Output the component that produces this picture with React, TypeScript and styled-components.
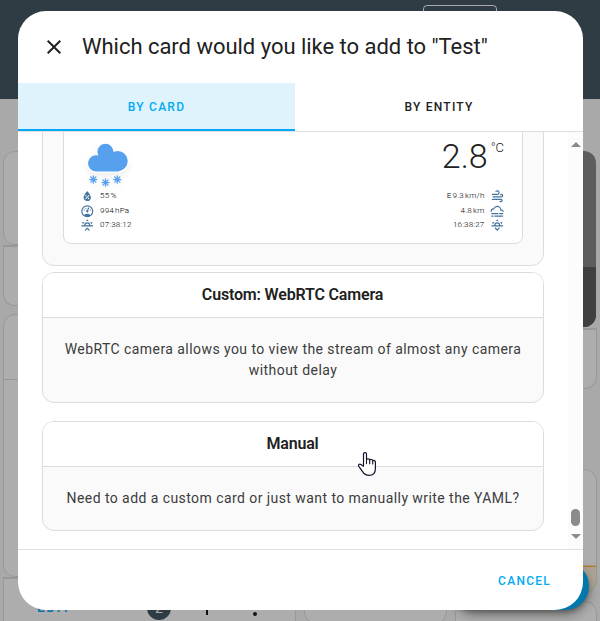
import React from "react";
import styled, { createGlobalStyle } from "styled-components";

const GlobalStyle = createGlobalStyle`
  *, *::before, *::after { box-sizing: border-box; }
  html, body { margin: 0; padding: 0; overflow: hidden; }
  body { font-family: Roboto, "Noto Sans", sans-serif; color: #212121; }
  button { font-family: inherit; border: 0; background: none; padding: 0; margin: 0; }
  svg { display: block; flex: none; }
`;

const Screen = styled.div`
  position: relative;
  width: 600px;
  height: 621px;
  overflow: hidden;
  background: #a9a9a9;
`;

/* ---------- dashboard behind the dialog ---------- */

const AppHeader = styled.header`
  display: flex;
  height: 99px;
  padding: 5px 0 0 423px;
  background: #2f3c44;
`;

const HeaderBox = styled.div`
  width: 74px;
  height: 40px;
  border: 1px solid #a9a9a9;
  border-radius: 4px;
`;

const Columns = styled.main`
  display: grid;
  grid-template-columns: 293px 293px;
  column-gap: 8px;
  padding: 52px 4px 0 3px;
`;

const Column = styled.div`
  display: flex;
  flex-direction: column;
`;

const Tile = styled.div<{ $h: number; $gap?: number; $joined?: boolean }>`
  height: ${(p) => p.$h}px;
  margin-top: ${(p) => p.$gap ?? 0}px;
  flex: none;
  overflow: hidden;
  background: #adadad;
  border: 1px solid #989898;
  border-top-width: ${(p) => (p.$joined ? 2 : 1)}px;
  border-radius: ${(p) => (p.$joined ? "0 0 12px 12px" : "12px")};
`;

const TileHeading = styled.div`
  height: 65px;
  border-bottom: 1px solid #989898;
`;

const EditBar = styled.div`
  display: flex;
  align-items: center;
  height: 58px;
  padding-left: 33px;
  color: #111;
`;

const EditLabel = styled.span`
  width: 110px;
  font-size: 14px;
  line-height: 16px;
  padding-bottom: 2px;
  font-weight: 500;
  letter-spacing: 1.25px;
  color: #0b74a8;
`;

const CountBadge = styled.span`
  display: flex;
  align-items: center;
  justify-content: center;
  width: 24px;
  height: 24px;
  margin-right: 24px;
  border-radius: 50%;
  background: #2f3c44;
  color: #a9a9a9;
  font-size: 14px;
`;

const BarIcon = styled.span`
  width: 24px;
  margin-right: 24px;
`;

const Camera = styled.div`
  height: 176px;
  width: 292px;
  border-radius: 12px;
  overflow: hidden;
  background: #5d5d5d;
  display: flex;
  align-items: flex-end;
`;

const CameraFooter = styled.div`
  width: 100%;
  height: 60px;
  background: #404040;
`;

const Pair = styled.div`
  display: grid;
  grid-template-columns: 143px 142px;
  gap: 8px;
`;

const GraphFill = styled.div`
  height: 30px;
  margin-top: 96px;
  border-top: 1px solid #b27b24;
  box-shadow: 0 -1px 0 rgba(178, 123, 36, 0.4);
  background: #ada495;
`;

const Fab = styled.div`
  position: absolute;
  right: 11px;
  bottom: 11px;
  width: 138px;
  height: 48px;
  border-radius: 24px;
  background: #0277ac;
  box-shadow: 0 3px 5px -1px rgba(0, 0, 0, 0.3), 0 6px 10px rgba(0, 0, 0, 0.22), 0 1px 14px rgba(0, 0, 0, 0.14);
`;

/* ---------- dialog ---------- */

const Dialog = styled.section`
  position: absolute;
  left: 18px;
  top: 11px;
  width: 565px;
  height: 599px;
  display: flex;
  flex-direction: column;
  overflow: hidden;
  border-radius: 28px;
  background: #fff;
`;

const DialogHeader = styled.div`
  display: flex;
  align-items: center;
  height: 72px;
  padding-left: 24px;
  gap: 16px;
`;

const CloseButton = styled.button`
  width: 24px;
  height: 24px;
  color: #212121;
`;

const Title = styled.h1`
  margin: 0;
  font-size: 22px;
  line-height: 28px;
  font-weight: 400;
  letter-spacing: -0.025px;
  white-space: nowrap;
`;

const Tabs = styled.div`
  display: grid;
  grid-template-columns: 277px 288px;
  height: 48px;
  flex: none;
`;

const Tab = styled.button<{ $active?: boolean }>`
  padding-top: 2px;
  font-size: 12px;
  font-weight: 500;
  letter-spacing: 1.25px;
  color: ${(p) => (p.$active ? "#03a9f4" : "#212121")};
  background: ${(p) => (p.$active ? "#dff3fd" : "#fff")};
  border-bottom: 2px solid ${(p) => (p.$active ? "#03a9f4" : "transparent")};
`;

const Body = styled.div`
  display: flex;
  height: 419px;
  flex: none;
  border-top: 1px solid #e0e0e0;
  border-bottom: 1px solid #e0e0e0;
`;

const CardList = styled.div`
  width: 550px;
  height: 417px;
  padding: 0 24px 18px;
  overflow: hidden;
  display: flex;
  flex-direction: column;
  justify-content: flex-end;
`;

const Card = styled.article<{ $h: number; $gap?: number }>`
  flex: none;
  height: ${(p) => p.$h}px;
  margin-top: ${(p) => p.$gap ?? 0}px;
  display: flex;
  flex-direction: column;
  overflow: hidden;
  border: 1px solid #dcdcdc;
  border-radius: 12px;
  background: #fafafa;
`;

const CardTitle = styled.h2`
  margin: 0;
  height: 45px;
  flex: none;
  padding-right: 1px;
  line-height: 44px;
  text-align: center;
  font-size: 16px;
  font-weight: 600;
  letter-spacing: -0.17px;
  background: #fff;
  border-bottom: 1px solid #dcdcdc;
`;

const CardText = styled.p`
  margin: 0;
  flex: 1;
  display: flex;
  align-items: center;
  justify-content: center;
  padding: 0 20px;
  text-align: center;
  font-size: 14px;
  line-height: 21px;
  letter-spacing: 0.435px;
  color: #3c3c3c;
`;

const PreviewArea = styled.div`
  flex: 1;
  padding: 0 20px 21px;
  display: flex;
`;

const Weather = styled.div`
  flex: 1;
  display: flex;
  flex-direction: column;
  justify-content: flex-end;
  padding: 0 18px 10.5px 16px;
  background: #fff;
  border: 1px solid #dcdcdc;
  border-radius: 8px;
`;

const WeatherTop = styled.div`
  display: flex;
  justify-content: space-between;
  height: 48.5px;
  padding-left: 4px;
`;

const Temperature = styled.div`
  display: flex;
  align-items: flex-start;
  height: 40px;
  font-weight: 300;
  font-size: 34px;
  line-height: 30px;
`;

const Unit = styled.span`
  margin-left: 3px;
  font-size: 13px;
  line-height: 13px;
`;

const Readings = styled.div`
  display: flex;
  justify-content: space-between;
`;

const ReadingColumn = styled.div`
  display: flex;
  flex-direction: column;
`;

const Reading = styled.div<{ $end?: boolean }>`
  display: flex;
  flex-direction: ${(p) => (p.$end ? "row-reverse" : "row")};
  align-items: center;
  gap: ${(p) => (p.$end ? 5 : 5.5)}px;
  height: 14.5px;
  font-size: 8px;
  font-weight: 300;
  line-height: 14px;
  letter-spacing: 0.2px;
  word-spacing: -1px;
  color: #000;
`;

const Scrollbar = styled.div`
  width: 15px;
  display: flex;
  flex-direction: column;
  align-items: center;
  padding: 10px 0;
  background: #fcfcfc;
  color: #8b8b8b;
`;

const Thumb = styled.div`
  width: 9px;
  height: 17px;
  margin: auto 0 8px;
  border-radius: 4.5px;
  background: #8b8b8b;
`;

const Actions = styled.footer`
  flex: 1;
  display: flex;
  align-items: center;
  justify-content: flex-end;
  padding: 2px 32px 0 0;
`;

const CancelButton = styled.button`
  font-size: 12px;
  font-weight: 500;
  letter-spacing: 1.25px;
  color: #03a9f4;
`;

const Pointer = styled.svg`
  position: absolute;
  left: 357px;
  top: 451px;
`;

/* ---------- icons ---------- */

const paths = {
  close:
    "M19,6.41L17.59,5L12,10.59L6.41,5L5,6.41L10.59,12L5,17.59L6.41,19L12,13.41L17.59,19L19,17.59L13.41,12L19,6.41Z",
  plus: "M19,13H13V19H11V13H5V11H11V5H13V11H19V13Z",
  dots: "M12,16A2,2 0 0,1 14,18A2,2 0 0,1 12,20A2,2 0 0,1 10,18A2,2 0 0,1 12,16M12,10A2,2 0 0,1 14,12A2,2 0 0,1 12,14A2,2 0 0,1 10,12A2,2 0 0,1 12,10M12,4A2,2 0 0,1 14,6A2,2 0 0,1 12,8A2,2 0 0,1 10,6A2,2 0 0,1 12,4Z",
  humidity:
    "M12,3.25C12,3.25 6,10 6,14C6,17.32 8.69,20 12,20A6,6 0 0,0 18,14C18,10 12,3.25 12,3.25M14.47,9.97L15.53,11.03L9.53,17.03L8.47,15.97M9.75,10A1.25,1.25 0 0,1 11,11.25A1.25,1.25 0 0,1 9.75,12.5A1.25,1.25 0 0,1 8.5,11.25A1.25,1.25 0 0,1 9.75,10M14.25,14.5A1.25,1.25 0 0,1 15.5,15.75A1.25,1.25 0 0,1 14.25,17A1.25,1.25 0 0,1 13,15.75A1.25,1.25 0 0,1 14.25,14.5Z",
  gauge:
    "M12,2A10,10 0 0,0 2,12A10,10 0 0,0 12,22A10,10 0 0,0 22,12A10,10 0 0,0 12,2M12,4A8,8 0 0,1 20,12C20,14.4 19,16.5 17.3,18C15.9,16.7 14,16 12,16C10,16 8.2,16.7 6.7,18C5,16.5 4,14.4 4,12A8,8 0 0,1 12,4M14,5.89C13.62,5.9 13.26,6.15 13.1,6.54L11.81,9.77L11.71,10C11,10.13 10.41,10.6 10.14,11.26C9.73,12.29 10.23,13.45 11.26,13.86C12.29,14.27 13.45,13.77 13.86,12.74C14.12,12.08 14,11.32 13.57,10.76L13.67,10.5L14.96,7.29L14.97,7.26C15.17,6.75 14.92,6.17 14.41,5.96C14.28,5.91 14.15,5.89 14,5.89M10,6A1,1 0 0,0 9,7A1,1 0 0,0 10,8A1,1 0 0,0 11,7A1,1 0 0,0 10,6M7,9A1,1 0 0,0 6,10A1,1 0 0,0 7,11A1,1 0 0,0 8,10A1,1 0 0,0 7,9M17,9A1,1 0 0,0 16,10A1,1 0 0,0 17,11A1,1 0 0,0 18,10A1,1 0 0,0 17,9Z",
  sunrise:
    "M3,12H7A5,5 0 0,1 12,7A5,5 0 0,1 17,12H21A1,1 0 0,1 22,13A1,1 0 0,1 21,14H3A1,1 0 0,1 2,13A1,1 0 0,1 3,12M15,12A3,3 0 0,0 12,9A3,3 0 0,0 9,12H15M12,2L14.39,5.42C13.65,5.15 12.84,5 12,5C11.16,5 10.35,5.15 9.61,5.42L12,2M3.34,7L7.5,6.65C6.9,7.16 6.36,7.78 5.94,8.5C5.5,9.24 5.25,10 5.11,10.79L3.34,7M20.65,7L18.88,10.79C18.74,10 18.47,9.23 18.05,8.5C17.63,7.78 17.1,7.15 16.5,6.64L20.65,7M12.71,16.3L15.82,19.41C16.21,19.8 16.21,20.43 15.82,20.82C15.43,21.21 14.8,21.21 14.41,20.82L12,18.41L9.59,20.82C9.2,21.21 8.57,21.21 8.18,20.82C7.79,20.43 7.79,19.8 8.18,19.41L11.29,16.3C11.5,16.1 11.74,16 12,16C12.26,16 12.5,16.1 12.71,16.3Z",
  sunset:
    "M3,12H7A5,5 0 0,1 12,7A5,5 0 0,1 17,12H21A1,1 0 0,1 22,13A1,1 0 0,1 21,14H3A1,1 0 0,1 2,13A1,1 0 0,1 3,12M15,12A3,3 0 0,0 12,9A3,3 0 0,0 9,12H15M12,2L14.39,5.42C13.65,5.15 12.84,5 12,5C11.16,5 10.35,5.15 9.61,5.42L12,2M3.34,7L7.5,6.65C6.9,7.16 6.36,7.78 5.94,8.5C5.5,9.24 5.25,10 5.11,10.79L3.34,7M20.65,7L18.88,10.79C18.74,10 18.47,9.23 18.05,8.5C17.63,7.78 17.1,7.15 16.5,6.64L20.65,7M12.71,20.71L15.82,17.6C16.21,17.21 16.21,16.57 15.82,16.18C15.43,15.79 14.8,15.79 14.41,16.18L12,18.59L9.59,16.18C9.2,15.79 8.57,15.79 8.18,16.18C7.79,16.57 7.79,17.21 8.18,17.6L11.29,20.71C11.5,20.9 11.74,21 12,21C12.26,21 12.5,20.9 12.71,20.71Z",
  wind: "M4,10A1,1 0 0,1 3,9A1,1 0 0,1 4,8H12A2,2 0 0,0 14,6A2,2 0 0,0 12,4C11.45,4 10.95,4.22 10.59,4.59C10.2,5 9.56,5 9.17,4.59C8.78,4.2 8.78,3.56 9.17,3.17C9.9,2.45 10.9,2 12,2A4,4 0 0,1 16,6A4,4 0 0,1 12,10H4M19,12A1,1 0 0,0 20,11A1,1 0 0,0 19,10C18.72,10 18.47,10.11 18.29,10.29C17.9,10.68 17.27,10.68 16.88,10.29C16.5,9.9 16.5,9.27 16.88,8.88C17.42,8.34 18.17,8 19,8A3,3 0 0,1 22,11A3,3 0 0,1 19,14H5A1,1 0 0,1 4,13A1,1 0 0,1 5,12H19M18,18H4A1,1 0 0,1 3,17A1,1 0 0,1 4,16H18A3,3 0 0,1 21,19A3,3 0 0,1 18,22C17.17,22 16.42,21.66 15.88,21.12C15.5,20.73 15.5,20.1 15.88,19.71C16.27,19.32 16.9,19.32 17.29,19.71C17.47,19.89 17.72,20 18,20A1,1 0 0,0 19,19A1,1 0 0,0 18,18Z",
  fog: "M3,15H13A1,1 0 0,1 14,16A1,1 0 0,1 13,17H3A1,1 0 0,1 2,16A1,1 0 0,1 3,15M16,15H21A1,1 0 0,1 22,16A1,1 0 0,1 21,17H16A1,1 0 0,1 15,16A1,1 0 0,1 16,15M1,12A5,5 0 0,1 6,7C7,4.65 9.3,3 12,3C15.43,3 18.24,5.66 18.5,9.03L19,9C21.19,9 22.97,10.76 23,13H21A2,2 0 0,0 19,11H17V10A5,5 0 0,0 12,5C9.5,5 7.45,6.82 7.06,9.19C6.73,9.07 6.37,9 6,9A3,3 0 0,0 3,12C3,12.35 3.06,12.69 3.17,13H1.1L1,12M3,19H5A1,1 0 0,1 6,20A1,1 0 0,1 5,21H3A1,1 0 0,1 2,20A1,1 0 0,1 3,19M8,19H21A1,1 0 0,1 22,20A1,1 0 0,1 21,21H8A1,1 0 0,1 7,20A1,1 0 0,1 8,19Z",
};

type IconName = keyof typeof paths;

function Icon({ name, size = 24, color = "currentColor" }: { name: IconName; size?: number; color?: string }) {
  return (
    <svg width={size} height={size} viewBox="0 0 24 24" fill={color}>
      <path d={paths[name]} />
    </svg>
  );
}

function Snowflake({ x, y }: { x: number; y: number }) {
  return (
    <g transform={`translate(${x} ${y})`} stroke="#57a0ee" strokeWidth="1.3" strokeLinecap="round">
      {[0, 45, 90, 135].map((a) => (
        <line key={a} x1="0" y1="-3.6" x2="0" y2="3.6" transform={`rotate(${a})`} />
      ))}
    </g>
  );
}

const CloudDrawing = styled.svg`
  filter: drop-shadow(0 4px 3px rgba(0, 0, 0, 0.06));
`;

function SnowCloud() {
  return (
    <CloudDrawing width="44" height="48" viewBox="84 141 44 48" overflow="visible">
      <path
        transform="translate(66.4 115.1) scale(1.3)"
        fill="#57a0ee"
        stroke="#fff"
        strokeWidth="1"
        d="M47.7,35.4c0-4.6-3.7-8.2-8.2-8.2c-1,0-1.9,0.2-2.8,0.5c-0.3-3.4-3.1-6.2-6.6-6.2c-3.7,0-6.7,3-6.7,6.7c0,0.8,0.2,1.6,0.4,2.3c-0.3-0.1-0.7-0.1-1-0.1c-3.7,0-6.7,3-6.7,6.7c0,3.6,2.9,6.6,6.5,6.7l17.2,0C44.2,43.3,47.7,39.8,47.7,35.4z"
      />
      <Snowflake x={93.3} y={179.6} />
      <Snowflake x={105.5} y={182.6} />
      <Snowflake x={117.3} y={179.6} />
    </CloudDrawing>
  );
}

const leftReadings: { icon: IconName; text: string }[] = [
  { icon: "humidity", text: "55 %" },
  { icon: "gauge", text: "994 hPa" },
  { icon: "sunrise", text: "07:38:12" },
];

const rightReadings: { icon: IconName; text: string }[] = [
  { icon: "wind", text: "E 9.3 km/h" },
  { icon: "fog", text: "4.8 km" },
  { icon: "sunset", text: "16:38:27" },
];

function WeatherCard() {
  return (
    <Weather>
      <WeatherTop>
        <SnowCloud />
        <Temperature>
          2.8<Unit>°C</Unit>
        </Temperature>
      </WeatherTop>
      <Readings>
        <ReadingColumn>
          {leftReadings.map((r) => (
            <Reading key={r.icon}>
              <Icon name={r.icon} size={14.5} color="#44739e" />
              {r.text}
            </Reading>
          ))}
        </ReadingColumn>
        <ReadingColumn>
          {rightReadings.map((r) => (
            <Reading key={r.icon} $end>
              <Icon name={r.icon} size={14.5} color="#44739e" />
              {r.text}
            </Reading>
          ))}
        </ReadingColumn>
      </Readings>
    </Weather>
  );
}

function Dashboard() {
  return (
    <>
      <AppHeader>
        <HeaderBox />
      </AppHeader>
      <Columns>
        <Column>
          <Tile $h={94} />
          <Tile $h={61} $joined />
          <Tile $h={263} $gap={8}>
            <TileHeading />
          </Tile>
          <Tile $h={62} $joined>
            <EditBar>
              <EditLabel>EDIT</EditLabel>
              <CountBadge>2</CountBadge>
              <BarIcon>
                <Icon name="plus" />
              </BarIcon>
              <BarIcon>
                <Icon name="dots" />
              </BarIcon>
            </EditBar>
          </Tile>
        </Column>
        <Column>
          <Camera>
            <CameraFooter />
          </Camera>
          <Tile $h={61} $gap={1} $joined />
          <Pair>
            <Tile $h={155} $gap={80} />
            <Tile $h={124} $gap={80}>
              <GraphFill />
            </Tile>
          </Pair>
          <Pair>
            <div />
            <Tile $h={60} $gap={-23} />
          </Pair>
        </Column>
      </Columns>
      <Fab />
    </>
  );
}

export default function App() {
  return (
    <Screen>
      <GlobalStyle />
      <Dashboard />
      <Dialog>
        <DialogHeader>
          <CloseButton aria-label="Close">
            <Icon name="close" />
          </CloseButton>
          <Title>Which card would you like to add to "Test"</Title>
        </DialogHeader>
        <Tabs>
          <Tab $active>BY CARD</Tab>
          <Tab>BY ENTITY</Tab>
        </Tabs>
        <Body>
          <CardList>
            <Card $h={300}>
              <PreviewArea>
                <WeatherCard />
              </PreviewArea>
            </Card>
            <Card $h={131} $gap={6}>
              <CardTitle>Custom: WebRTC Camera</CardTitle>
              <CardText>WebRTC camera allows you to view the stream of almost any camera without delay</CardText>
            </Card>
            <Card $h={110} $gap={18}>
              <CardTitle>Manual</CardTitle>
              <CardText>Need to add a custom card or just want to manually write the YAML?</CardText>
            </Card>
          </CardList>
          <Scrollbar>
            <svg width="10" height="5" viewBox="0 0 10 5" fill="currentColor">
              <path d="M5 0L10 5H0Z" />
            </svg>
            <Thumb />
            <svg width="10" height="5" viewBox="0 0 10 5" fill="currentColor">
              <path d="M0 0H10L5 5Z" />
            </svg>
          </Scrollbar>
        </Body>
        <Actions>
          <CancelButton>CANCEL</CancelButton>
        </Actions>
      </Dialog>
      <Pointer width="20" height="26" viewBox="0 0 20 26">
        <path
          d="M6.5 15.2V3.2C6.5 1 9.5 1 9.5 3.2V8.6C10 7.4 12.4 7.5 12.7 9C13.4 8 15.4 8.3 15.7 9.8C16.6 9 18.4 9.6 18.4 11.2V17.5C18.4 22 15.8 24.4 12 24.4C8.6 24.4 7 23 5.4 20.4L1.8 15.4C0.8 13.8 2.4 12.7 3.8 13.5L6.5 15.2Z"
          fill="#fff"
          stroke="#15152c"
          strokeWidth="1.2"
          strokeLinejoin="round"
        />
        <path d="M9.5 8.6V12.6M12.7 9V12.8M15.7 9.8V13" fill="none" stroke="#15152c" strokeWidth="1.1" strokeLinecap="round" />
      </Pointer>
    </Screen>
  );
}
